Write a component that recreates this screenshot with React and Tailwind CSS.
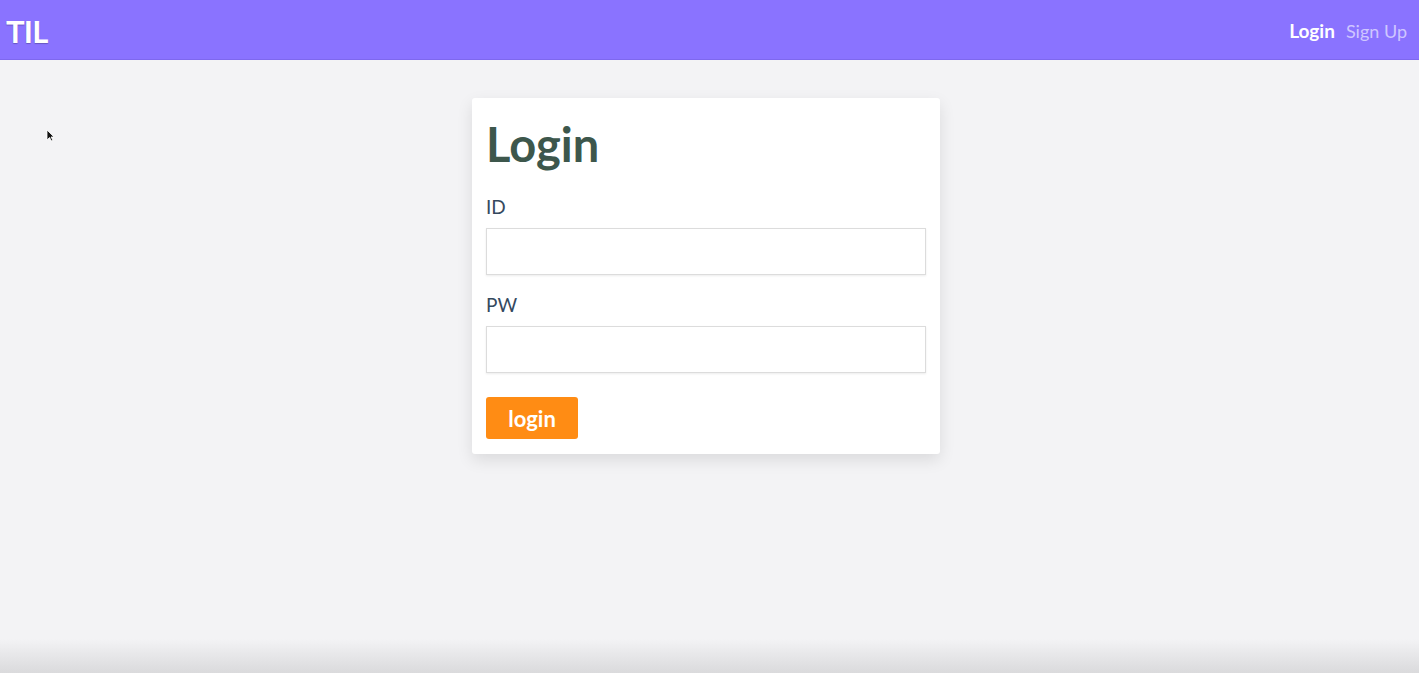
import React from 'react';

const font = { fontFamily: 'Lato, "Open Sans", sans-serif' };

const Field = ({ label, type = 'text' }) => (
  <div className="flex flex-col">
    <label className="text-[19px] leading-none text-[#34495e] mt-[8px] mb-[12px]">{label}</label>
    <input
      type={type}
      className="h-[47px] w-full border border-[#dcdcdc] bg-white shadow-[0_1px_2px_rgba(0,0,0,0.08)] outline-none px-3"
    />
  </div>
);

export default function App() {
  return (
    <div className="relative min-h-screen flex flex-col bg-[#f3f3f5]" style={font}>
      {/* Top navigation */}
      <nav className="h-[60px] flex items-center justify-between bg-[#8a73ff] border-b border-[#7e68ee] pl-[6px] pr-[12px] pt-[4px]">
        <span className="text-[31px] font-bold text-white tracking-tight [text-shadow:0_1px_1px_rgba(0,0,0,0.25)]">TIL</span>
        <div className="flex items-baseline gap-[11px]">
          <a className="text-[19px] font-bold text-white">Login</a>
          <a className="text-[18px] text-white/60">Sign Up</a>
        </div>
      </nav>

      {/* Login card */}
      <div className="flex justify-center pr-[7px] pt-[38px]">
        <div className="w-[468px] bg-white rounded-[3px] shadow-[0_6px_16px_rgba(0,0,0,0.10)] px-[14px] pt-[16px] pb-[15px]">
          <h1 className="text-[47px] font-bold leading-[60px] text-[#3d574c]">Login</h1>
          <div className="mt-[15px] flex flex-col gap-[12px]">
            <Field label="ID" />
            <Field label="PW" type="password" />
          </div>
          <button className="mt-[24px] h-[42px] w-[92px] rounded-[3px] bg-[#ff8c14] text-[22px] font-bold text-white">
            login
          </button>
        </div>
      </div>

      <div className="flex-1" />
      {/* bottom shade */}
      <div className="h-[34px] bg-gradient-to-b from-[#f3f3f5] to-[#dadadc]" />

      {/* mouse pointer */}
      <svg className="absolute left-[46px] top-[129px]" width="9" height="13" viewBox="0 0 9 13">
        <path d="M1 1 L1 11 L3.5 8.5 L5.5 12 L7 11.3 L5 8 L8 8 Z" fill="#111" stroke="#fff" strokeWidth="0.8" />
      </svg>
    </div>
  );
}
